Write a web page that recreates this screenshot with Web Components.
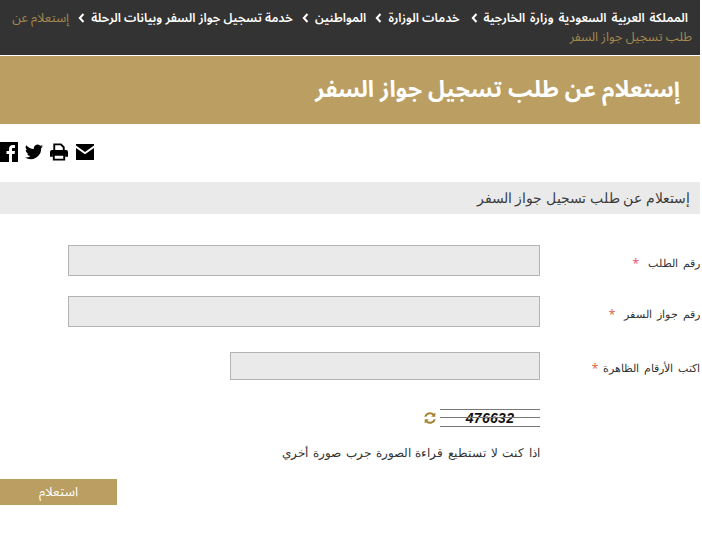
<!DOCTYPE html>
<html lang="ar">
<head>
<meta charset="utf-8">
<title>استعلام</title>
<style>
  html, body { background: #fff; }
  body { margin: 0 2px 0 0; padding: 0; font-family: "Noto Sans", sans-serif; color: #333; }
  crumb-link:first-child { margin-right: 4px; word-spacing: 1.7px; }
</style>
</head>
<body dir="rtl">
<bread-crumbs>
  <crumb-link>المملكة العربية السعودية وزارة الخارجية</crumb-link>
  <crumb-link>خدمات الوزارة</crumb-link>
  <crumb-link>المواطنين</crumb-link>
  <crumb-link>خدمة تسجيل جواز السفر وبيانات الرحلة</crumb-link>
  <crumb-link current>إستعلام عن طلب تسجيل جواز السفر</crumb-link>
</bread-crumbs>
<page-title>إستعلام عن طلب تسجيل جواز السفر</page-title>
<share-bar></share-bar>
<section-band>إستعلام عن طلب تسجيل جواز السفر</section-band>
<form-row label="رقم الطلب" top="31" star="#f0527e" height="31" gapstar="9"></form-row>
<form-row label="رقم جواز السفر" top="20" star="#e0683f" height="31" gapstar="9"></form-row>
<form-row label="اكتب الأرقام الظاهرة" top="25" star="#e0683f" height="28" width="310" gapstar="5"></form-row>
<captcha-box></captcha-box>
<help-note>اذا كنت لا تستطيع قراءة الصورة جرب صورة أخري</help-note>
<submit-button>استعلام</submit-button>

<script>
class BreadCrumbs extends HTMLElement {
  connectedCallback() {
    this.attachShadow({ mode: 'open' });
    this.shadowRoot.innerHTML = `
      <style>
        :host {
          display: block;
          background: #333;
          color: #fff;
          height: 46px;
          padding: 9px 8px 0 0;
          font-family: "Noto Sans Arabic", "Noto Sans", sans-serif;
          font-size: 12.300px;
          line-height: 19px;
          border-bottom: 1px solid #fff;
        }
      </style>
      <slot></slot>
    `;
  }
}

class CrumbLink extends HTMLElement {
  connectedCallback() {
    this.attachShadow({ mode: 'open' });
    const current = this.hasAttribute('current');
    this.shadowRoot.innerHTML = `
      <style>
        :host {
          display: inline;
          color: ${current ? '#a5894e' : '#fff'};
          font-weight: ${current ? 'normal' : '600'};
          font-size: ${current ? '12.700px' : 'inherit'};
        }
        svg { margin: 0 6px; vertical-align: -1px; }
      </style>
      <slot></slot>${current ? '' : `<svg width="7" height="10" viewBox="0 0 7 10"><path d="M5.500 1 1.800 5l3.700 4" fill="none" stroke="#fff" stroke-width="2"/></svg>`}
    `;
  }
}

class PageTitle extends HTMLElement {
  connectedCallback() {
    this.attachShadow({ mode: 'open' });
    this.shadowRoot.innerHTML = `
      <style>
        :host {
          display: flex;
          align-items: center;
          height: 68px;
          padding-right: 20px;
          background: #ba9e62;
          color: #fff;
          font-family: "Noto Sans Arabic", "Noto Sans", sans-serif;
          font-size: 22.900px;
          line-height: 30px;
          font-weight: bold;
        }
      </style>
      <slot></slot>
    `;
  }
}

class ShareBar extends HTMLElement {
  connectedCallback() {
    this.attachShadow({ mode: 'open' });
    this.shadowRoot.innerHTML = `
      <style>
        :host {
          display: flex;
          direction: ltr;
          align-items: center;
          gap: 7px;
          height: 20px;
          padding: 18px 0 20px;
        }
        svg { display: block; }
      </style>
      <svg width="18" height="20" viewBox="0 0 18 20"><path d="M0 0h18v20H0z"/><path fill="#fff" d="M12 20v-8h2.600l.4-3h-3V7.300c0-.9.3-1.400 1.500-1.400H15V3.200C14.700 3.100 13.800 3 12.800 3 10.500 3 9 4.400 9 6.900V9H6.500v3H9v8z"/></svg>
      <svg width="18" height="16" viewBox="0 0 24 20"><path d="M24 2.400a10 10 0 0 1-2.800.8 5 5 0 0 0 2.200-2.700 10 10 0 0 1-3.100 1.200A4.900 4.900 0 0 0 11.900 6.100 14 14 0 0 1 1.700 1a4.900 4.900 0 0 0 1.500 6.600 4.900 4.900 0 0 1-2.200-.6 4.900 4.900 0 0 0 3.900 4.900 4.900 4.900 0 0 1-2.200.1 4.900 4.900 0 0 0 4.600 3.400A9.900 9.900 0 0 1 0 17.400 14 14 0 0 0 21.500 5a10 10 0 0 0 2.500-2.600z"/></svg>
      <svg width="18" height="18" viewBox="0 0 19 18"><path d="M4.500 8V1h7l3 3v4" fill="none" stroke="#000" stroke-width="2"/><path d="M2 7h15a2 2 0 0 1 2 2v5h-3v-3H3v3H0V9a2 2 0 0 1 2-2z"/><path d="M4 12h11v5H4z" fill="none" stroke="#000" stroke-width="2"/></svg>
      <svg width="18" height="16" viewBox="0 0 18 16" style="margin-left:1px"><path d="M0 0h18v1.500L9 8 0 1.500z"/><path d="M0 4l9 6.300L18 4v12H0z"/></svg>
    `;
  }
}

class SectionBand extends HTMLElement {
  connectedCallback() {
    this.attachShadow({ mode: 'open' });
    this.shadowRoot.innerHTML = `
      <style>
        :host {
          display: flex;
          align-items: center;
          height: 32px;
          padding-right: 10px;
          background: #eaeaea;
          color: #3c3c3c;
          font-size: 14px;
          line-height: 30px;
        }
      </style>
      <slot></slot>
    `;
  }
}

class FormRow extends HTMLElement {
  connectedCallback() {
    this.attachShadow({ mode: 'open' });
    const a = n => this.getAttribute(n);
    const w = a('width') || 472;
    this.shadowRoot.innerHTML = `
      <style>
        :host {
          display: grid;
          grid-template-columns: 160px 1fr;
          align-items: center;
          margin-top: ${a('top')}px;
          font-size: 11px;
          word-spacing: 2px;
          color: #333;
        }
        label { display: flex; gap: ${a('gapstar')}px; padding-top: 5px; }
        .star { color: ${a('star')}; font-size: 12px; }
        input {
          display: block;
          box-sizing: border-box;
          width: ${w}px;
          height: ${a('height')}px;
          margin: 0;
          background: #eaeaea;
          border: 1px solid #b4b4b4;
          border-radius: 0;
        }
      </style>
      <label>${a('label')}<span class="star">*</span></label>
      <div><input type="text"></div>
    `;
  }
}

class CaptchaBox extends HTMLElement {
  connectedCallback() {
    this.attachShadow({ mode: 'open' });
    this.shadowRoot.innerHTML = `
      <style>
        :host {
          display: flex;
          align-items: center;
          gap: 4px;
          margin: 28px 160px 0 0;
          height: 20px;
        }
        .img {
          position: relative;
          width: 100px;
          height: 18px;
          box-sizing: border-box;
          border-top: 1px solid #777;
          border-bottom: 1px solid #777;
          direction: ltr;
          text-align: center;
          font: italic bold 14px/16px "Liberation Sans", sans-serif;
          letter-spacing: .3px;
          color: #111;
        }
        .img::after {
          content: "";
          position: absolute;
          left: 0;
          right: 0;
          top: 7px;
          border-top: 1px solid #777;
        }
        svg { display: block; }
      </style>
      <div class="img">476632</div>
      <svg width="12" height="12" viewBox="0 0 12 12" fill="#a5822f"><path d="M2.300 4.800H.2A5.900 5.900 0 0 1 10 1.800L11.300.6v4.200H7.100l1.600-1.600A4 4 0 0 0 2.300 4.800z"/><path d="M9.700 7.200h2.100A5.900 5.900 0 0 1 2 10.200L.7 11.400V7.200h4.200L3.300 8.800a4 4 0 0 0 6.400-1.600z"/></svg>
    `;
  }
}

class HelpNote extends HTMLElement {
  connectedCallback() {
    this.attachShadow({ mode: 'open' });
    this.shadowRoot.innerHTML = `
      <style>
        :host {
          display: block;
          margin: 16px 160px 0 0;
          font-size: 12.300px;
          word-spacing: 1.500px;
          line-height: 18px;
          color: #333;
        }
      </style>
      <slot></slot>
    `;
  }
}

class SubmitButton extends HTMLElement {
  connectedCallback() {
    this.attachShadow({ mode: 'open' });
    this.shadowRoot.innerHTML = `
      <style>
        :host {
          display: flex;
          align-items: center;
          justify-content: center;
          width: 117px;
          height: 26px;
          margin: 17px 583px 0 0;
          background: #ba9e62;
          color: #fff;
          font-family: "Noto Sans Arabic", "Noto Sans", sans-serif;
          font-size: 13px;
        }
      </style>
      <slot></slot>
    `;
  }
}

customElements.define('bread-crumbs', BreadCrumbs);
customElements.define('crumb-link', CrumbLink);
customElements.define('page-title', PageTitle);
customElements.define('share-bar', ShareBar);
customElements.define('section-band', SectionBand);
customElements.define('form-row', FormRow);
customElements.define('captcha-box', CaptchaBox);
customElements.define('help-note', HelpNote);
customElements.define('submit-button', SubmitButton);
</script>
</body>
</html>
